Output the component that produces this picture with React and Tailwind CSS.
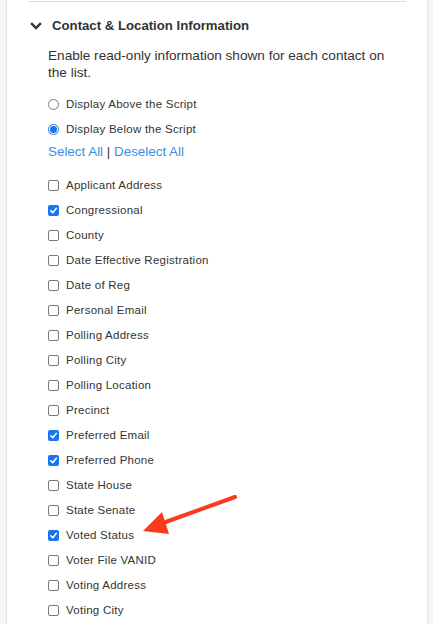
import React from "react";

const items = [
  ["Applicant Address", false],
  ["Congressional", true],
  ["County", false],
  ["Date Effective Registration", false],
  ["Date of Reg", false],
  ["Personal Email", false],
  ["Polling Address", false],
  ["Polling City", false],
  ["Polling Location", false],
  ["Precinct", false],
  ["Preferred Email", true],
  ["Preferred Phone", true],
  ["State House", false],
  ["State Senate", false],
  ["Voted Status", true],
  ["Voter File VANID", false],
  ["Voting Address", false],
  ["Voting City", false],
];

function Checkbox({ checked }) {
  if (checked) {
    return (
      <span className="flex h-[11px] w-[11px] shrink-0 items-center justify-center rounded-[2px] bg-[#1a73f0]">
        <svg width="9" height="9" viewBox="0 0 10 10">
          <path d="M2 5.2 L4.2 7.4 L8.2 2.6" fill="none" stroke="white" strokeWidth="1.7" strokeLinecap="round" strokeLinejoin="round" />
        </svg>
      </span>
    );
  }
  return <span className="h-[11px] w-[11px] shrink-0 rounded-[2px] border border-[#7a7a7a] bg-white" />;
}

function Radio({ checked }) {
  if (checked) {
    return (
      <span className="flex h-[11px] w-[11px] shrink-0 items-center justify-center rounded-full border border-[#1a73f0] bg-white">
        <span className="h-[7px] w-[7px] rounded-full bg-[#1a73f0]" />
      </span>
    );
  }
  return <span className="h-[11px] w-[11px] shrink-0 rounded-full border border-[#7a7a7a] bg-white" />;
}

export default function App() {
  return (
    <div className="relative h-[624px] w-[433px] overflow-hidden bg-[#f6f6f9]" style={{ fontFamily: '"Liberation Sans", Arial, sans-serif' }}>
      <div className="ml-[6px] h-full w-[422px] border-x border-[#e4e4ea] bg-white px-[21px]">
        <div className="h-[2px] border-b border-[#dcdce6]" />
        <div className="mt-[15px] flex items-center">
          <svg width="12" height="10" viewBox="0 0 12 10" className="ml-[2px]">
            <path d="M2 3 L6 7 L10 3" fill="none" stroke="#333" strokeWidth="2.4" strokeLinecap="square" />
          </svg>
          <span className="ml-[10px] text-[13.2px] font-bold leading-[18px] text-[#333]">Contact &amp; Location Information</span>
        </div>
        <div className="ml-[20px]">
          <p className="mt-[12px] w-[345px] text-[13.6px] leading-[17px] text-[#333]">
            Enable read-only information shown for each contact on the list.
          </p>
          <div className="mt-[11px] flex flex-col">
            <label className="flex h-[25px] items-center gap-[7px] text-[11.5px] tracking-[0.25px] text-[#333]">
              <Radio checked={false} />
              <span>Display Above the Script</span>
            </label>
            <label className="flex h-[25px] items-center gap-[7px] text-[11.5px] tracking-[0.25px] text-[#333]">
              <Radio checked={true} />
              <span>Display Below the Script</span>
            </label>
          </div>
          <div className="mt-[1px] text-[13.4px] leading-[18px] text-[#3b8fe4]">
            <span>Select All</span>
            <span className="text-[#333]"> | </span>
            <span>Deselect All</span>
          </div>
          <div className="mt-[12px] flex flex-col">
            {items.map(([name, checked]) => (
              <label key={name} className="flex h-[25px] items-center gap-[7px] text-[11.5px] tracking-[0.25px] text-[#333]">
                <Checkbox checked={checked} />
                <span>{name}</span>
              </label>
            ))}
          </div>
        </div>
      </div>
      <svg className="absolute left-0 top-0" width="433" height="624" viewBox="0 0 433 624">
        <line x1="235" y1="497" x2="160" y2="524" stroke="#fa3a1e" strokeWidth="4" strokeLinecap="round" />
        <polygon points="143,531 162,512 169,534" fill="#fa3a1e" />
      </svg>
    </div>
  );
}
